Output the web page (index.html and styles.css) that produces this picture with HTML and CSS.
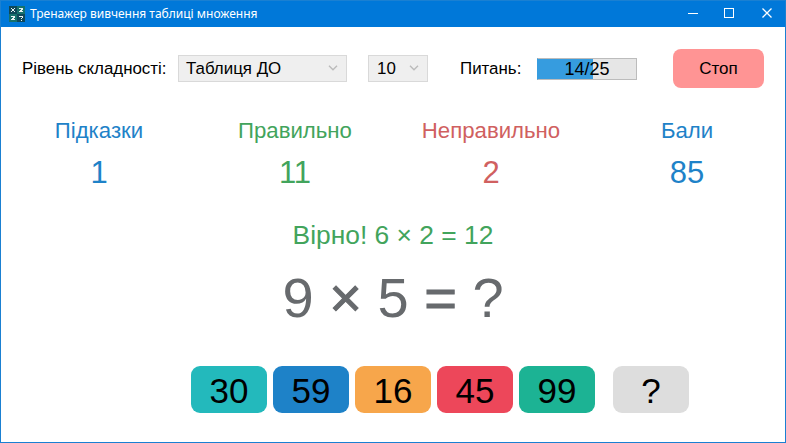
FILE: index.html
```html
<!DOCTYPE html>
<html lang="uk">
<head>
<meta charset="utf-8">
<title>Тренажер вивчення таблиці множення</title>
<link rel="stylesheet" href="styles.css">
</head>
<body>
<div class="window">
  <header class="titlebar">
    <svg class="app-icon" width="16" height="16" viewBox="0 0 16 16" shape-rendering="crispEdges">
      <path fill="#0e4858" d="M0 0h8v8H0zM8 8h8v8H8z"/>
      <path fill="#16716c" d="M8 0h8v8H8zM0 8h8v8H0z"/>
      <path fill="#e8f2f2" d="M2 2h1v1H2zM5 2h1v1H5zM3 3h2v2H3zM2 5h1v1H2zM5 5h1v1H5zM10 2h4v1h-4zM12 3h2v1h-2zM11 4h2v1h-2zM10 5h4v1h-4zM2 10h4v1H2zM4 11h2v1H4zM3 12h2v1H3zM2 13h4v1H2zM10 10h4v1h-4zM13 11h1v1h-1zM12 12h1v1h-1zM12 14h1v1h-1z"/>
    </svg>
    <span class="title">Тренажер вивчення таблиці множення</span>
    <svg class="controls" width="86" height="12" viewBox="0 0 86 12" fill="none" stroke="#fff">
      <path d="M0 6.5h10M36.5 1.5h9v9h-9z" shape-rendering="crispEdges"/>
      <path d="M74.500 1.500l9 9M83.500 1.500l-9 9" stroke-width="1.300"/>
    </svg>
  </header>
  <main class="content">
    <section class="toolbar">
      <span class="label level">Рівень складності:</span>
      <div class="select select-level"><span class="label">Таблиця ДО</span><svg width="10" height="6" viewBox="0 0 10 6"><path d="M1 .8l4 4 4-4" fill="none" stroke="#bbb" stroke-width="1.400"/></svg></div>
      <div class="select select-limit"><span class="label">10</span><svg width="10" height="6" viewBox="0 0 10 6"><path d="M1 .8l4 4 4-4" fill="none" stroke="#bbb" stroke-width="1.400"/></svg></div>
      <span class="label questions">Питань:</span>
      <div class="progress"><span>14/25</span></div>
      <button class="stop">Стоп</button>
    </section>
    <section class="stats">
      <div class="stat blue"><span class="stat-name">Підказки</span><span class="stat-value">1</span></div>
      <div class="stat green"><span class="stat-name">Правильно</span><span class="stat-value">11</span></div>
      <div class="stat red"><span class="stat-name">Неправильно</span><span class="stat-value">2</span></div>
      <div class="stat blue"><span class="stat-name">Бали</span><span class="stat-value">85</span></div>
    </section>
    <div class="feedback">Вірно! 6 × 2 = 12</div>
    <div class="question">9 <span class="sign">×</span> 5 <span class="sign">=</span> ?</div>
    <section class="answers">
      <button class="answer teal">30</button>
      <button class="answer azure">59</button>
      <button class="answer orange">16</button>
      <button class="answer crimson">45</button>
      <button class="answer emerald">99</button>
      <button class="answer hint">?</button>
    </section>
  </main>
</div>
</body>
</html>
```
FILE: styles.css
```css
* { box-sizing: border-box; }
body { margin: 0; font-family: "Liberation Sans", Arial, sans-serif; color: #000; background: #fff; }
button { font-family: inherit; color: #000; border: 0; padding: 0; }
.window { width: 786px; height: 443px; border: 1px solid #1a80d2; display: flex; flex-direction: column; overflow: hidden; }
.titlebar { height: 26px; flex: none; background: #0078d9; display: flex; align-items: center; padding: 0 11px 0 8px; }
.app-icon { flex: none; margin: -1px 5px 0 0; }
.title { font: 12px/16px "Noto Sans", sans-serif; color: #fff; white-space: nowrap; }
.controls { margin: -2px 0 0 auto; }
.content { flex: 1; display: flex; flex-direction: column; }
.toolbar { display: flex; align-items: center; height: 39px; margin: 22px 21px 0; }
.label { font-size: 16.9px; line-height: 20px; white-space: nowrap; }
.level { width: 156px; }
.select { height: 27px; display: flex; align-items: center; justify-content: space-between; background: #efefef; border: 1px solid #d9d9d9; padding: 0 8px 0 7px; }
.select svg { margin-top: -2px; }
.select-level { width: 169px; }
.select-limit { width: 60px; margin-left: 21px; padding-left: 8px; }
.questions { width: 77px; margin-left: 32px; }
.progress { width: 100px; height: 22px; border: 1px solid #bcbcbc; border-left-color: #369cdf; background: linear-gradient(90deg, #369cdf 55px, #e6e6e6 55px); text-align: center; font-size: 18px; line-height: 21px; }
.stop { margin-left: auto; width: 91px; height: 39px; border-radius: 8px; background: #ff9494; font-size: 17px; }
.stats { display: grid; grid-template-columns: repeat(4, 196px); margin-top: 30px; }
.stat { display: flex; flex-direction: column; align-items: center; white-space: nowrap; }
.stat-name { font-size: 22.2px; line-height: 26px; }
.stat-value { font-size: 31px; line-height: 36px; margin-top: 11px; }
.blue { color: #1e82c8; }
.green { color: #42a45c; }
.red { color: #d06060; }
.feedback { color: #42a45c; font-size: 26.4px; line-height: 30px; text-align: center; margin-top: 29px; }
.question { color: #676a6d; font-size: 56px; line-height: 64px; text-align: center; margin-top: 16px; }
.sign { -webkit-text-stroke: 1px #676a6d; }
.answers { display: flex; gap: 6px; margin: 36px 0 0 190px; }
.answer { width: 76px; height: 47px; border-radius: 9px; font-size: 35px; line-height: 45px; padding-top: 2px; }
.teal { background: #23b9bc; }
.azure { background: #1e82c8; }
.orange { background: #f7a64b; }
.crimson { background: #ed475a; }
.emerald { background: #1cb394; }
.hint { background: #ddd; margin-left: 12px; }
```
